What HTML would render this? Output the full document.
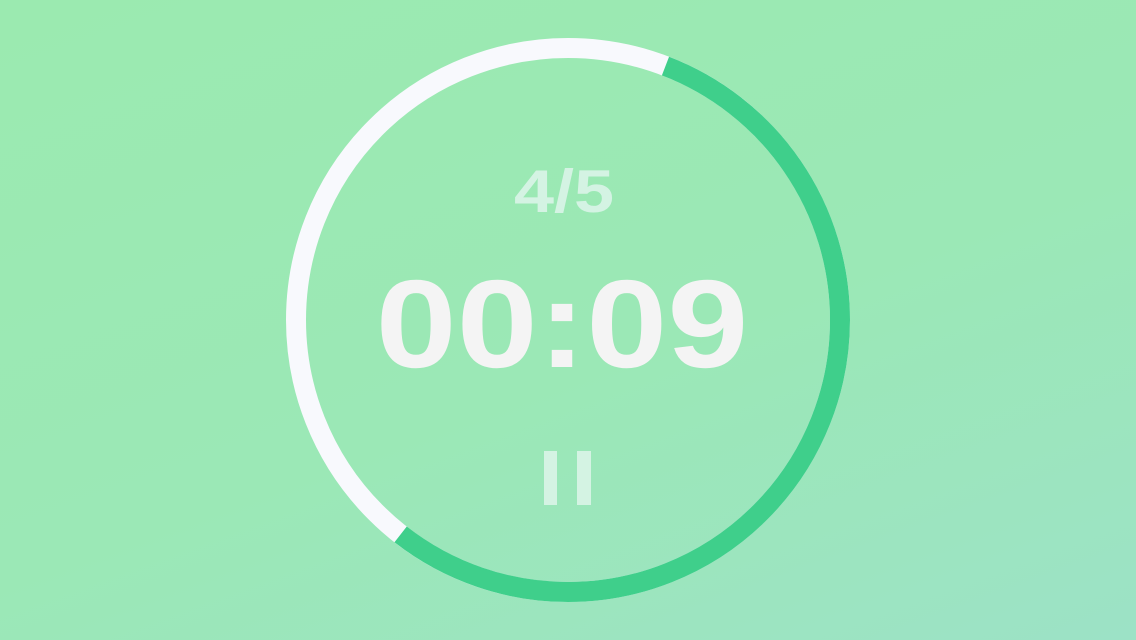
<!DOCTYPE html>
<html><head><style>
html,body{margin:0;padding:0;width:1136px;height:640px;overflow:hidden;}
body{background:linear-gradient(160deg,#9beab0 0%,#9be8b6 55%,#9ce2c6 100%);position:relative;font-family:"Liberation Sans",sans-serif;}
svg{position:absolute;left:0;top:0;}
.t{position:absolute;width:1136px;text-align:center;font-weight:bold;}
</style></head><body>
<svg width="1136" height="640">
<g transform="rotate(-90 568 320)">
<circle cx="568" cy="320" r="272" fill="none" stroke="#f8f9fd" stroke-width="20"/>
<circle cx="568" cy="320" r="272" fill="none" stroke="#3fcf8b" stroke-width="20" stroke-dasharray="935 2000" stroke-dashoffset="-99.7"/>
</g>
<rect x="544" y="451" width="13" height="54" fill="#d4f3e3"/>
<rect x="577" y="451" width="14" height="54" fill="#d4f3e3"/>
</svg>
<div class="t" style="left:-4px;top:152px;font-size:60px;line-height:80px;color:#d4f3e3;transform:scaleX(1.2);">4/5</div>
<div class="t" style="left:-6px;top:255px;font-size:125px;line-height:140px;color:#f4f4f4;transform:scaleX(1.166);">00:09</div>
</body></html>
